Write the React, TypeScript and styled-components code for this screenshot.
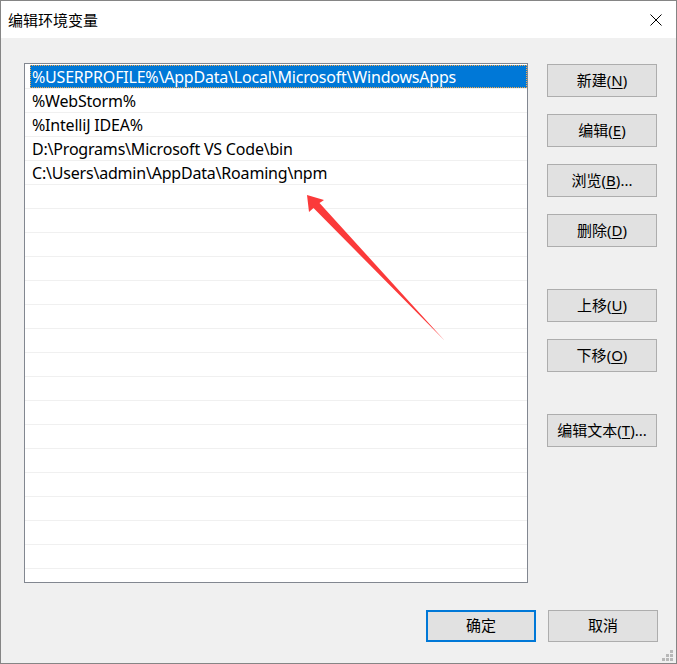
import React from "react";
import styled, { createGlobalStyle } from "styled-components";

const Global = createGlobalStyle`
  html, body { margin: 0; padding: 0; background: #f0f0f0; }
  body { font-family: "Noto Sans", "Noto Sans CJK SC", sans-serif; }
`;

const Window = styled.div`
  position: relative;
  width: 677px;
  height: 664px;
  box-sizing: border-box;
  border: 1px solid #858585;
  background: #f0f0f0;
  display: flex;
  flex-direction: column;
  overflow: hidden;
`;

const TitleBar = styled.div`
  height: 37px;
  background: #ffffff;
  display: flex;
  align-items: center;
  justify-content: space-between;
  padding: 0 14px 0 7px;
  flex-shrink: 0;
`;

const Title = styled.span`
  font-family: "Noto Sans CJK SC", sans-serif;
  font-size: 15px;
  color: #000;
  line-height: 1;
`;

const CloseIcon = styled.svg`
  width: 12px;
  height: 12px;
  display: block;
`;

const Body = styled.div`
  flex: 1;
  display: flex;
  flex-direction: column;
  padding: 25px 0 0 23px;
`;

const Main = styled.div`
  display: flex;
  gap: 19px;
`;

const ListBox = styled.div`
  width: 504px;
  height: 520px;
  box-sizing: border-box;
  border: 1px solid #828790;
  background: #ffffff;
  padding-top: 1px;
  overflow: hidden;
`;

const Row = styled.div`
  height: 23px;
  border-bottom: 1px solid #f0f0f0;
  display: flex;
`;

const Cell = styled.div<{ $selected?: boolean }>`
  flex: 1;
  margin-left: 5px;
  padding-left: 2px;
  display: flex;
  align-items: center;
  font-size: 16px;
  letter-spacing: -0.2px;
  white-space: nowrap;
  color: ${(p) => (p.$selected ? "#ffffff" : "#000000")};
  background: ${(p) => (p.$selected ? "#0078d7" : "transparent")};
  outline: ${(p) => (p.$selected ? "1px dotted #f7a94a" : "none")};
  outline-offset: -1px;
`;

const ButtonColumn = styled.div`
  display: flex;
  flex-direction: column;
  padding-top: 1px;
`;

const Button = styled.button<{ $gap?: number; $primary?: boolean; $h?: number }>`
  width: 110px;
  height: ${(p) => p.$h ?? 33}px;
  margin-top: ${(p) => p.$gap ?? 0}px;
  box-sizing: border-box;
  background: #e1e1e1;
  border: ${(p) => (p.$primary ? "2px solid #0078d7" : "1px solid #adadad")};
  border-radius: 0;
  font-family: "Noto Sans CJK SC", sans-serif;
  font-size: 15px;
  color: #000;
  padding: 0 0 3px 0;
  display: flex;
  align-items: center;
  justify-content: center;
  cursor: default;
`;

const Key = styled.span`
  text-decoration: underline;
  text-underline-offset: 2px;
  font-family: "Noto Sans", sans-serif;
`;

const Paren = styled.span`
  font-family: "Noto Sans", sans-serif;
`;

const Footer = styled.div`
  display: flex;
  justify-content: flex-end;
  gap: 12px;
  margin-top: 27px;
  padding-right: 18px;
`;

const Overlay = styled.svg`
  position: absolute;
  left: 0;
  top: 0;
  pointer-events: none;
`;

const Grip = styled.svg`
  position: absolute;
  right: 2px;
  bottom: 1px;
  width: 12px;
  height: 12px;
`;

const entries = [
  "%USERPROFILE%\\AppData\\Local\\Microsoft\\WindowsApps",
  "%WebStorm%",
  "%IntelliJ IDEA%",
  "D:\\Programs\\Microsoft VS Code\\bin",
  "C:\\Users\\admin\\AppData\\Roaming\\npm",
];

const rows = Array.from({ length: 22 }, (_, i) => entries[i] ?? "");

const Label = ({ text, k, suffix }: { text: string; k: string; suffix?: string }) => (
  <span>
    {text}
    <Paren>(</Paren>
    <Key>{k}</Key>
    <Paren>){suffix ?? ""}</Paren>
  </span>
);

export default function App() {
  return (
    <>
      <Global />
      <Window>
        <TitleBar>
          <Title>编辑环境变量</Title>
          <CloseIcon viewBox="0 0 12 12">
            <path d="M0.5 0.5 L11.5 11.5 M11.5 0.5 L0.5 11.5" stroke="#000" strokeWidth="1" fill="none" />
          </CloseIcon>
        </TitleBar>
        <Body>
          <Main>
            <ListBox>
              {rows.map((r, i) => (
                <Row key={i}>
                  <Cell $selected={i === 0}>{r}</Cell>
                </Row>
              ))}
            </ListBox>
            <ButtonColumn>
              <Button><Label text="新建" k="N" /></Button>
              <Button $gap={17}><Label text="编辑" k="E" /></Button>
              <Button $gap={17}><Label text="浏览" k="B" suffix="..." /></Button>
              <Button $gap={17}><Label text="删除" k="D" /></Button>
              <Button $gap={42}><Label text="上移" k="U" /></Button>
              <Button $gap={17}><Label text="下移" k="O" /></Button>
              <Button $gap={42}><Label text="编辑文本" k="T" suffix="..." /></Button>
            </ButtonColumn>
          </Main>
          <Footer>
            <Button $primary $h={32}>确定</Button>
            <Button $h={32}>取消</Button>
          </Footer>
        </Body>
        <Overlay width="677" height="664" viewBox="0 0 677 664">
          <polygon
            points="306,194 323,199 318.5,202 444,340 312.5,207 308,211"
            fill="#fb3a3a"
          />
        </Overlay>
        <Grip viewBox="0 0 12 12">
          <rect x="8" y="0" width="3" height="3" fill="#b8b8b8" />
          <rect x="4" y="4" width="3" height="3" fill="#b8b8b8" />
          <rect x="8" y="4" width="3" height="3" fill="#b8b8b8" />
          <rect x="0" y="8" width="3" height="3" fill="#b8b8b8" />
          <rect x="4" y="8" width="3" height="3" fill="#b8b8b8" />
          <rect x="8" y="8" width="3" height="3" fill="#b8b8b8" />
        </Grip>
      </Window>
    </>
  );
}
